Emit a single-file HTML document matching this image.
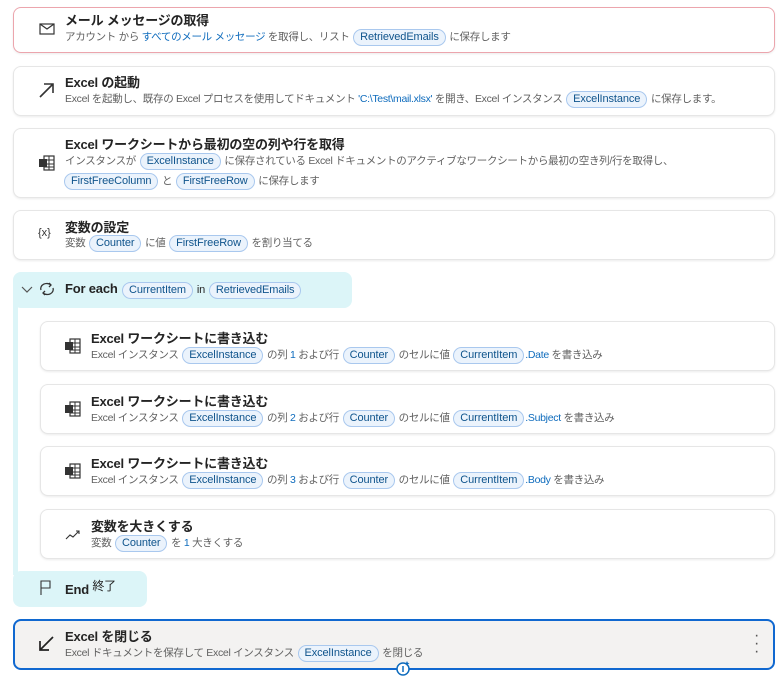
<!DOCTYPE html>
<html><head><meta charset="utf-8"><style>
*{margin:0;padding:0;box-sizing:border-box}
body{width:781px;height:686px;background:#fff;font-family:"Liberation Sans","Noto Sans CJK JP",sans-serif;color:#242424;position:relative;overflow:hidden}
.c{position:absolute;background:#fff;border:1px solid #e6e6e6;border-radius:8px;box-shadow:0 1px 2px rgba(0,0,0,.08)}
.t{position:absolute;font-size:13px;font-weight:bold;white-space:nowrap;color:#242424;letter-spacing:-0.2px}
.d{position:absolute;font-size:10.5px;color:#616161;white-space:nowrap;letter-spacing:-0.3px}
.p{display:inline-block;border:1px solid #a9c8ee;background:#ebf3fc;color:#0f548c;border-radius:9px;padding:0 6px;line-height:15px;font-size:11px;letter-spacing:-0.1px;margin:0 1px}
.b{color:#0f6cbd}
.i{position:absolute;width:18px;height:18px}
</style></head><body>

<div class="c" style="left:13px;top:7px;width:762px;height:46px;border-color:#eca5ad"></div>
<svg class="i" style="left:38px;top:20px" viewBox="0 0 18 18"><rect x="2" y="4" width="14" height="10" fill="none" stroke="#333" stroke-width="1.2"/><path d="M2 4l7 5 7-5" fill="none" stroke="#333" stroke-width="1.2"/></svg>
<div class="t" style="left:65px;top:10px">メール メッセージの取得</div>
<div class="d" style="left:65px;top:29px">アカウント から <span class="b">すべてのメール メッセージ</span> を取得し、リスト <span class="p">RetrievedEmails</span> に保存します</div>

<div class="c" style="left:13px;top:66px;width:762px;height:50px"></div>
<svg class="i" style="left:37px;top:81px" viewBox="0 0 18 18"><path d="M3 16L16 3M7 3h9v9" fill="none" stroke="#333" stroke-width="1.6"/></svg>
<div class="t" style="left:65px;top:72px">Excel の起動</div>
<div class="d" style="left:65px;top:91px">Excel を起動し、既存の Excel プロセスを使用してドキュメント <span class="b">'C:\Test\mail.xlsx'</span> を開き、Excel インスタンス <span class="p">ExcelInstance</span> に保存します。</div>

<div class="c" style="left:13px;top:128px;width:762px;height:70px"></div>
<svg class="i" style="left:38px;top:154px" viewBox="0 0 18 18"><rect x="6" y="2" width="10" height="14" fill="none" stroke="#333" stroke-width="1.2"/><path d="M6 6h10M6 10h10M6 13h10M11 2v14" stroke="#333" stroke-width="1"/><rect x="1" y="5" width="8" height="8" fill="#333"/></svg>
<div class="t" style="left:65px;top:134px">Excel ワークシートから最初の空の列や行を取得</div>
<div class="d" style="left:65px;top:153px">インスタンスが <span class="p">ExcelInstance</span> に保存されている Excel ドキュメントのアクティブなワークシートから最初の空き列/行を取得し、</div>
<div class="d" style="left:63px;top:173px"><span class="p">FirstFreeColumn</span> と <span class="p">FirstFreeRow</span> に保存します</div>

<div class="c" style="left:13px;top:210px;width:762px;height:50px"></div>
<div style="position:absolute;left:38px;top:227px;font-size:11px;color:#333">{x}</div>
<div class="t" style="left:65px;top:217px">変数の設定</div>
<div class="d" style="left:65px;top:235px">変数 <span class="p">Counter</span> に値 <span class="p">FirstFreeRow</span> を割り当てる</div>

<div style="position:absolute;left:13px;top:272px;width:339px;height:36px;background:#dcf5f8;border-radius:8px"></div>
<div style="position:absolute;left:13px;top:300px;width:5px;height:275px;background:#dcf5f8"></div>
<svg class="i" style="left:18px;top:280px" viewBox="0 0 18 18"><path d="M4 7l5 5 5-5" fill="none" stroke="#555" stroke-width="1.2"/></svg>
<svg class="i" style="left:38px;top:280px" viewBox="0 0 18 18"><path d="M3 10a6 5 0 0 1 10-5M15 8a6 5 0 0 1-10 5M11 3l2 2-2 2M7 11l-2 2 2 2" fill="none" stroke="#333" stroke-width="1.3"/></svg>
<div class="t" style="left:65px;top:281px">For each <span class="p" style="font-weight:normal">CurrentItem</span><span style="font-weight:normal;font-size:11px"> in </span><span class="p" style="font-weight:normal">RetrievedEmails</span></div>

<div class="c" style="left:40px;top:321px;width:735px;height:50px"></div>
<svg class="i" style="left:64px;top:337px" viewBox="0 0 18 18"><rect x="6" y="2" width="10" height="14" fill="none" stroke="#333" stroke-width="1.2"/><path d="M6 6h10M6 10h10M6 13h10M11 2v14" stroke="#333" stroke-width="1"/><rect x="1" y="5" width="8" height="8" fill="#333"/></svg>
<div class="t" style="left:91px;top:328px">Excel ワークシートに書き込む</div>
<div class="d" style="left:91px;top:347px">Excel インスタンス <span class="p">ExcelInstance</span> の列 <span class="b">1</span> および行 <span class="p">Counter</span> のセルに値 <span class="p">CurrentItem</span><span class="b">.Date</span> を書き込み</div>

<div class="c" style="left:40px;top:384px;width:735px;height:50px"></div>
<svg class="i" style="left:64px;top:400px" viewBox="0 0 18 18"><rect x="6" y="2" width="10" height="14" fill="none" stroke="#333" stroke-width="1.2"/><path d="M6 6h10M6 10h10M6 13h10M11 2v14" stroke="#333" stroke-width="1"/><rect x="1" y="5" width="8" height="8" fill="#333"/></svg>
<div class="t" style="left:91px;top:391px">Excel ワークシートに書き込む</div>
<div class="d" style="left:91px;top:410px">Excel インスタンス <span class="p">ExcelInstance</span> の列 <span class="b">2</span> および行 <span class="p">Counter</span> のセルに値 <span class="p">CurrentItem</span><span class="b">.Subject</span> を書き込み</div>

<div class="c" style="left:40px;top:446px;width:735px;height:50px"></div>
<svg class="i" style="left:64px;top:462px" viewBox="0 0 18 18"><rect x="6" y="2" width="10" height="14" fill="none" stroke="#333" stroke-width="1.2"/><path d="M6 6h10M6 10h10M6 13h10M11 2v14" stroke="#333" stroke-width="1"/><rect x="1" y="5" width="8" height="8" fill="#333"/></svg>
<div class="t" style="left:91px;top:453px">Excel ワークシートに書き込む</div>
<div class="d" style="left:91px;top:472px">Excel インスタンス <span class="p">ExcelInstance</span> の列 <span class="b">3</span> および行 <span class="p">Counter</span> のセルに値 <span class="p">CurrentItem</span><span class="b">.Body</span> を書き込み</div>

<div class="c" style="left:40px;top:509px;width:735px;height:50px"></div>
<svg class="i" style="left:64px;top:526px" viewBox="0 0 18 18"><path d="M2 13l4-4 3 2 6-6M12 5h3v3" fill="none" stroke="#333" stroke-width="1.1"/></svg>
<div class="t" style="left:91px;top:516px">変数を大きくする</div>
<div class="d" style="left:91px;top:535px">変数 <span class="p">Counter</span> を <span class="b">1</span> 大きくする</div>

<div style="position:absolute;left:13px;top:571px;width:134px;height:36px;background:#dcf5f8;border-radius:8px"></div>
<svg class="i" style="left:38px;top:579px" viewBox="0 0 18 18"><path d="M3 16V2h9v7H3" fill="none" stroke="#333" stroke-width="1.1"/></svg>
<div class="t" style="left:65px;top:581px">End <span style="font-weight:normal;font-size:12px;position:relative;top:-4px">終了</span></div>

<div class="c" style="left:13px;top:619px;width:762px;height:51px;background:#f3f2f1;border:2px solid #1068d0;box-shadow:none"></div>
<svg class="i" style="left:37px;top:635px" viewBox="0 0 18 18"><path d="M16 2L3 15M3 6v9h9" fill="none" stroke="#222" stroke-width="1.7"/></svg>
<div class="t" style="left:65px;top:626px">Excel を閉じる</div>
<div class="d" style="left:65px;top:645px">Excel ドキュメントを保存して Excel インスタンス <span class="p">ExcelInstance</span> を閉じる</div>
<div style="position:absolute;left:754px;top:632px;font-size:16px;color:#555;line-height:8px">·<br>·<br>·</div>
<svg style="position:absolute;left:395px;top:660px" width="16" height="16" viewBox="0 0 16 16"><circle cx="8" cy="9" r="6" fill="#fff" stroke="#0f6cbd" stroke-width="1.5"/><path d="M8 6v6" stroke="#0f6cbd" stroke-width="1.5"/><path d="M12 1l.8 1.7 1.7.8-1.7.8L12 6l-.8-1.7L9.5 3.5l1.7-.8z" fill="#0f6cbd"/></svg>
</body></html>
